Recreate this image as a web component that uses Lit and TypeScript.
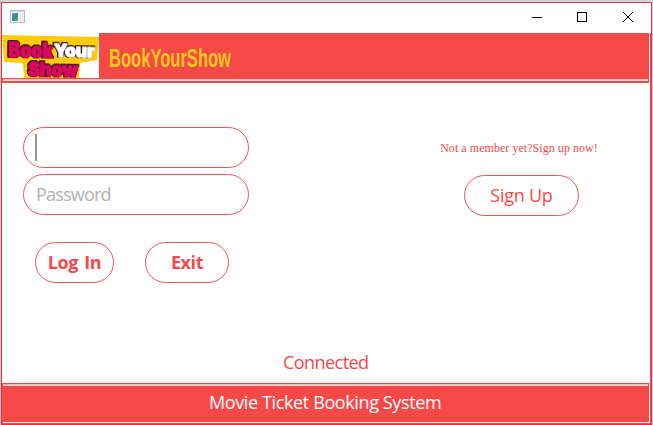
import { LitElement, html, css, svg } from "lit";
import { customElement } from "lit/decorators.js";

@customElement("brand-logo")
class BrandLogo extends LitElement {
  static styles = css`
    :host { display: block; width: 97px; height: 45px; background: #fff; }
    svg { display: block; }
    text {
      font-family: "Inter", "Lato", "Open Sans", sans-serif;
      font-weight: 900;
      stroke-width: 1.3px;
      stroke-linejoin: round;
    }
    .word { filter: drop-shadow(0.8px 0 0 #33151f) drop-shadow(-0.8px 0 0 #33151f) drop-shadow(0 0.8px 0 #33151f) drop-shadow(0 -0.4px 0 #33151f); }
    .pink { fill: #dc0860; stroke: #dc0860; }
    .white { fill: #fff; stroke: #fff; }
  `;
  private word(t: string, x: number, y: number, size: number, w: number, cls: string) {
    return svg`<g class="word"><text class=${cls} x=${x} y=${y} font-size=${size} textLength=${w}
      lengthAdjust="spacingAndGlyphs">${t}</text></g>`;
  }
  render() {
    return html`<svg width="97" height="45" viewBox="0 0 97 45">
      <path d="M0 2 L97 4 L95 27 L78 30 L77 45 L22 45 L21 30 L2 29 Z" fill="#fecb0a" />
      <g transform="rotate(1 6 22)">
        ${this.word("Book", 6.5, 24, 19.5, 44.5, "pink")}
        ${this.word("Your", 52, 22.500, 18, 40.5, "white")}
      </g>
      <g transform="rotate(1 26 44)">${this.word("Show", 26, 43, 19, 50, "pink")}</g>
    </svg>`;
  }
}

@customElement("app-root")
class AppRoot extends LitElement {
  static styles = css`
    :host {
      display: block;
      box-sizing: border-box;
      width: 653px;
      height: 425px;
      padding: 2px 1px 0;
      background: linear-gradient(90deg, #c9c9cb 0 1px, #d6d3dc 1px);
      font-family: "Open Sans", "Noto Sans", sans-serif;
      font-size: 18px;
      color: #f74848;
      overflow: hidden;
    }
    * { box-sizing: border-box; }
    .window {
      display: flex;
      flex-direction: column;
      width: 651px;
      height: 423px;
      border: 1px solid #e8303c;
      background: #fff;
    }
    .titlebar { height: 30px; flex: none; display: flex; align-items: flex-start; padding-left: 8px; }
    .app-icon { margin-top: 7px; display: block; }
    .controls { display: block; margin-left: auto; }
    .content { flex: 1; display: flex; flex-direction: column; border-right: 1px solid #f74848; }
    .header { height: 50px; flex: none; background: #f74848; display: flex; flex-direction: column; border-right: 1px solid #fff; }
    .brand { height: 45px; display: flex; }
    .header-line { height: 2px; margin: 1px 1px 0 1px; background: linear-gradient(#f3c0c0 50%, #f6dcdc 50%); }
    .brand-name { display: block; margin-left: 9px; }
    .brand-name text { font-family: "Liberation Sans Narrow", "Liberation Sans", sans-serif; font-weight: 700; fill: #f9c81c; }
    .main { height: 300px; flex: none; display: flex; justify-content: space-between; padding: 44px 71px 0 21px; }
    .login { width: 226px; display: flex; flex-direction: column; }
    .field { height: 41px; border: 1px solid #f65252; border-radius: 21px; display: flex; align-items: center; padding-left: 12px; color: #b0b0b0; }
    .field + .field { margin-top: 6px; }
    .caret { width: 2px; height: 27px; margin-left: -1px; background: #969696; }
    .password { letter-spacing: -0.8px; padding-bottom: 1px; }
    .actions { display: flex; gap: 31px; margin: 27px 0 0 12px; }
    .pill { height: 41px; border: 1px solid #f65252; border-radius: 21px; display: flex; align-items: center; justify-content: center; background: #fff; white-space: nowrap; padding-bottom: 1px; }
    .login-btn { width: 79px; font-weight: 700; letter-spacing: -0.4px; word-spacing: 2px; }
    .exit-btn { width: 84px; font-weight: 700; letter-spacing: -0.4px; }
    .join { display: flex; flex-direction: column; align-items: center; width: 115px; }
    .prompt { font: 12px/16px "Liberation Serif", serif; letter-spacing: 0.05px; white-space: nowrap; margin-top: 13px; margin-right: 5px; }
    .signup { width: 115px; margin-top: 19px; letter-spacing: -0.25px; }
    .status { height: 40px; line-height: 40px; margin-top: -41px; margin-bottom: 1px; flex: none; padding-left: 281px; letter-spacing: -0.55px; }
    .footer { height: 40px; flex: none; background: #f74848; border-top: 1px solid #f74848; border-right: 1px solid #fff; display: flex; flex-direction: column; }
    .footer-line { height: 2px; flex: none; margin: 0 1px; background: linear-gradient(#d9c3c3 50%, #f0cfcf 50%); }
    .footer-text { flex: 1; line-height: 33px; color: #fff; padding-left: 206px; border-bottom: 1px solid #fff; margin-left: 1px; white-space: nowrap; letter-spacing: -0.38px; }
    .base { flex: 1; background: #f74848; }
  `;
  render() {
    return html`<div class="window">
      <div class="titlebar">
        <svg class="app-icon" width="15" height="13" viewBox="0 0 15 13">
          <defs><linearGradient id="g" x2="1" y2="1"><stop stop-color="#6da0cf" /><stop offset=".5" stop-color="#3d8582" /><stop offset="1" stop-color="#64b46d" /></linearGradient></defs>
          <rect x=".5" y=".5" width="14" height="12" fill="#f4f5f6" stroke="#b5bbc1" />
          <path d="M1 1.5H14" stroke="#d5d9dc" />
          <rect x="2" y="3" width="6" height="8" fill="url(#g)" />
          <rect x="9" y="3" width="2" height="8" fill="#dfe6ea" />
          <rect x="12" y="3" width="1" height="8" fill="#d5e6e2" />
        </svg>
        <svg class="controls" width="120" height="29" viewBox="0 0 120 29" fill="none" stroke="#000">
          <path d="M1 14.5H11" />
          <rect x="46.500" y="9.500" width="9" height="9" />
          <path d="M92 9L102 19M102 9L92 19" />
        </svg>
      </div>
      <div class="content">
        <div class="header">
          <div class="brand">
            <brand-logo></brand-logo>
            <svg class="brand-name" width="124" height="45">
              <text x="1" y="34" font-size="25" textLength="122" lengthAdjust="spacingAndGlyphs">BookYourShow</text>
            </svg>
          </div>
          <div class="header-line"></div>
        </div>
        <div class="main">
          <div class="login">
            <div class="field"><div class="caret"></div></div>
            <div class="field password"><span>Password</span></div>
            <div class="actions">
              <div class="pill login-btn">Log In</div>
              <div class="pill exit-btn">Exit</div>
            </div>
          </div>
          <div class="join">
            <div class="prompt">Not a member yet?Sign up now!</div>
            <div class="pill signup">Sign Up</div>
          </div>
        </div>
        <div class="status">Connected</div>
        <div class="footer">
          <div class="footer-line"></div>
          <div class="footer-text">Movie Ticket Booking System</div>
        </div>
        <div class="base"></div>
      </div>
    </div>`;
  }
}
